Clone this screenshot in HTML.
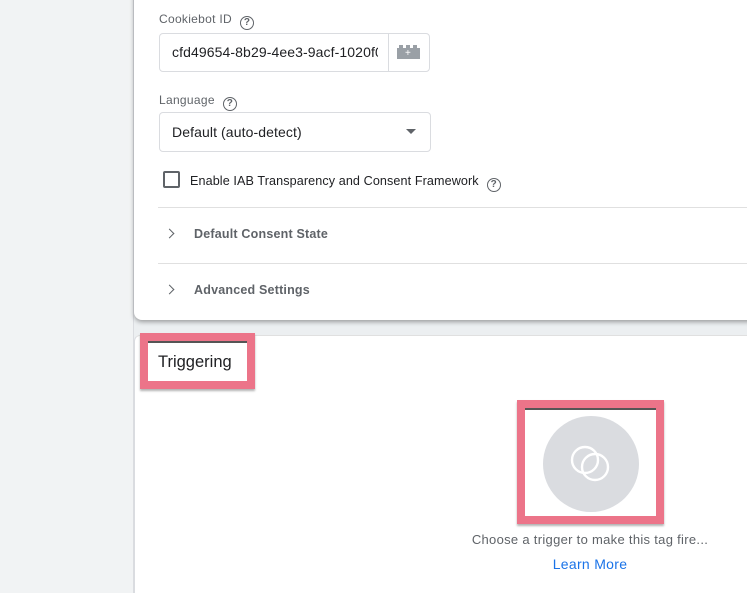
<!DOCTYPE html>
<html><head><meta charset="utf-8"><style>
*{box-sizing:border-box;margin:0;padding:0}
html,body{width:747px;height:593px;overflow:hidden}
body{background:#eceff1;font-family:"Liberation Sans",sans-serif;position:relative}
.left{position:absolute;left:0;top:0;width:134px;height:593px;background:#f1f3f4;border-right:1px solid #dadce0}
.card1{position:absolute;left:134px;top:-10px;width:620px;height:330px;background:#fff;border-radius:0 0 0 8px;box-shadow:0 2px 5px rgba(0,0,0,.35)}
.card2{position:absolute;left:134px;top:335px;width:620px;height:258px;background:#fff;border-left:1px solid #dadce0;border-top:1px solid #e0e0e0;border-radius:6px 0 0 0}
.abs{position:absolute}
.lbl{font-size:12px;color:#5f6368;letter-spacing:.3px}
.q{display:inline-block;width:14px;height:14px;border:1.4px solid #5f6368;border-radius:50%;font-size:10px;line-height:11px;text-align:center;color:#5f6368;vertical-align:-2px;margin-left:8px;font-weight:bold;letter-spacing:0}
.box{border:1px solid #dadce0;border-radius:4px;background:#fff}
.hr{position:absolute;left:158px;width:600px;height:1px;background:#e0e0e0}
.pink{position:absolute;border:8px solid #ec7489;box-shadow:0 2px 2px rgba(0,0,0,.3)}
.pink:before{content:"";position:absolute;left:0;right:0;top:0;height:2px;background:#555}
.chev{position:absolute;width:7px;height:7px;border-right:1.6px solid #5f6368;border-top:1.6px solid #5f6368;transform:rotate(45deg)}
</style></head><body>
<div class="left"></div>
<div class="card1"></div>
<div class="card2"></div>
<div class="abs lbl" style="left:159px;top:12px">Cookiebot ID<span class="q">?</span></div>
<div class="abs box" style="left:159px;top:33px;width:271px;height:39px"></div>
<div class="abs" style="left:388px;top:34px;width:1px;height:37px;background:#dadce0"></div>
<div class="abs" style="left:172px;top:44px;font-size:14px;color:#202124;width:206px;overflow:hidden;white-space:nowrap;letter-spacing:.1px">cfd49654-8b29-4ee3-9acf-1020f0</div>
<div class="abs" style="left:397px;top:48px;width:23px;height:11px;background:#9aa0a6"></div>
<div class="abs" style="left:399px;top:45px;width:4px;height:3px;background:#9aa0a6"></div>
<div class="abs" style="left:406px;top:45px;width:4px;height:3px;background:#9aa0a6"></div>
<div class="abs" style="left:413px;top:45px;width:4px;height:3px;background:#9aa0a6"></div>
<div class="abs" style="left:405px;top:50px;color:#fff;font-size:10px;line-height:8px">+</div>
<div class="abs lbl" style="left:159px;top:93px">Language<span class="q">?</span></div>
<div class="abs box" style="left:159px;top:112px;width:272px;height:40px"></div>
<div class="abs" style="left:172px;top:124px;font-size:14px;color:#202124;letter-spacing:.1px">Default (auto-detect)</div>
<div class="abs" style="left:406px;top:129px;border-left:5px solid transparent;border-right:5px solid transparent;border-top:5px solid #5f6368"></div>
<div class="abs" style="left:163px;top:171px;width:17px;height:17px;border:2px solid #5f6368;border-radius:2px"></div>
<div class="abs" style="left:190px;top:174px;font-size:12.6px;color:#202124;letter-spacing:.1px">Enable IAB Transparency and Consent Framework<span class="q">?</span></div>
<div class="hr" style="top:207px"></div>
<div class="chev" style="left:166px;top:230px"></div>
<div class="abs" style="left:194px;top:227px;font-size:12.5px;color:#5f6368;font-weight:bold;letter-spacing:.2px">Default Consent State</div>
<div class="hr" style="top:263px"></div>
<div class="chev" style="left:166px;top:286px"></div>
<div class="abs" style="left:194px;top:283px;font-size:12.5px;color:#5f6368;font-weight:bold;letter-spacing:.2px">Advanced Settings</div>
<div class="pink" style="left:140px;top:333px;width:115px;height:56px"></div>
<div class="abs" style="left:158px;top:353px;font-size:16.5px;color:#202124">Triggering</div>
<div class="pink" style="left:517px;top:400px;width:147px;height:124px"></div>
<div class="abs" style="left:543px;top:416px;width:96px;height:96px;border-radius:50%;background:#dadce0"></div>
<svg class="abs" style="left:543px;top:416px" width="96" height="96"><circle cx="42" cy="44" r="13" fill="none" stroke="#fff" stroke-width="2.4"/><circle cx="52" cy="51" r="13" fill="none" stroke="#fff" stroke-width="2.4"/></svg>
<div class="abs" style="left:440px;top:532px;width:300px;text-align:center;font-size:13px;color:#5f6368;letter-spacing:.3px">Choose a trigger to make this tag fire...</div>
<div class="abs" style="left:440px;top:556px;width:300px;text-align:center;font-size:14px;color:#1a73e8;letter-spacing:.3px">Learn More</div>
</body></html>
